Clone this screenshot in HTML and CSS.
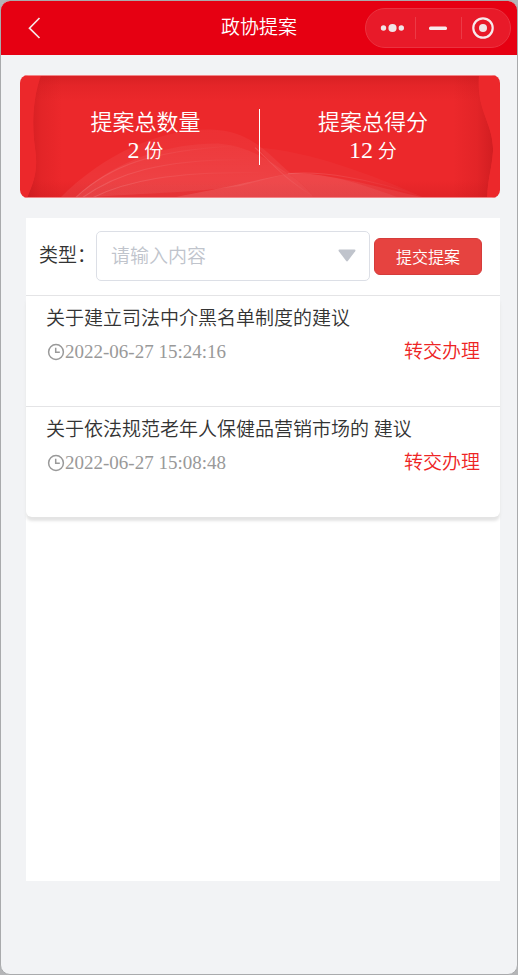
FILE: index.html
```html
<!DOCTYPE html>
<html lang="zh-CN">
<head>
<meta charset="utf-8">
<meta name="viewport" content="width=device-width, initial-scale=1">
<title>政协提案</title>
<link rel="stylesheet" href="styles.css">
</head>
<body>
<div class="window">
  <header class="topbar">
    <button class="back" type="button" aria-label="返回">
      <svg width="14" height="24" viewBox="0 0 14 24" fill="none" stroke="#f7e3e4" stroke-width="1.7"><path d="M12.5 2 2.5 12.2 12.5 22"/></svg>
    </button>
    <h1 class="topbar-title">政协提案</h1>
    <div class="capsule">
      <button class="capsule-btn" type="button" aria-label="更多">
        <svg width="26" height="24" viewBox="0 0 26 24" fill="#f0e6e7"><circle cx="5.5" cy="12" r="2.7"/><circle cx="14.5" cy="12" r="4.1"/><circle cx="23.3" cy="12" r="2.7"/></svg>
      </button>
      <button class="capsule-btn" type="button" aria-label="最小化">
        <svg width="24" height="24" viewBox="0 0 24 24" fill="#f7ebec"><rect x="2" y="10.5" width="18" height="3.6" rx="1.5"/></svg>
      </button>
      <button class="capsule-btn" type="button" aria-label="关闭">
        <svg width="24" height="24" viewBox="0 0 24 24" fill="none"><circle cx="12" cy="12" r="9.7" stroke="#f7ebec" stroke-width="2.2"/><circle cx="12" cy="12" r="4" fill="#f0e6e7"/></svg>
      </button>
    </div>
  </header>

  <main class="page">
    <section class="banner">
      <svg class="banner-art" viewBox="0 0 480 122" preserveAspectRatio="none" aria-hidden="true">
        <defs>
          <clipPath id="sheet"><path d="M21 0C12 26 12 50 15 73C18 92 15 104 7 122H467C468 102 472 92 473 76C474 48 456 36 459 0Z"/></clipPath>
          <linearGradient id="shade-left" x1="0" y1="0" x2="1" y2="0"><stop offset="0" stop-color="#b81418" stop-opacity=".5"/><stop offset=".4" stop-color="#b81418" stop-opacity=".18"/><stop offset="1" stop-color="#b81418" stop-opacity="0"/></linearGradient>
          <linearGradient id="shade-right" x1="1" y1="0" x2="0" y2="0"><stop offset="0" stop-color="#b81418" stop-opacity=".5"/><stop offset=".4" stop-color="#b81418" stop-opacity=".18"/><stop offset="1" stop-color="#b81418" stop-opacity="0"/></linearGradient>
          <linearGradient id="shade-top" x1="0" y1="0" x2="0" y2="1"><stop offset="0" stop-color="#b81418" stop-opacity=".4"/><stop offset=".4" stop-color="#b81418" stop-opacity=".16"/><stop offset="1" stop-color="#b81418" stop-opacity="0"/></linearGradient>
          <linearGradient id="shade-bottom" x1="0" y1="1" x2="0" y2="0"><stop offset="0" stop-color="#b81418" stop-opacity=".22"/><stop offset="1" stop-color="#b81418" stop-opacity="0"/></linearGradient>
          <linearGradient id="veil" x1="0" y1="0" x2="0" y2="1"><stop offset="0" stop-color="#fff" stop-opacity=".04"/><stop offset="1" stop-color="#fff" stop-opacity=".07"/></linearGradient>
          <linearGradient id="fade" x1="0" y1="0" x2="1" y2="0"><stop offset="0" stop-color="#fff" stop-opacity=".14"/><stop offset="1" stop-color="#fff" stop-opacity="0"/></linearGradient>
        </defs>
        <rect width="480" height="122" fill="#ec282b"/>
        <g clip-path="url(#sheet)">
          <path d="M0 0H480V26H0Z" fill="url(#shade-top)"/>
          <path d="M0 104H480V122H0Z" fill="url(#shade-bottom)"/>
          <path d="M21 0C12 26 12 50 15 73C18 92 15 104 7 122H42V0Z" fill="url(#shade-left)"/>
          <path d="M467 122C468 102 472 92 473 76C474 48 456 36 459 0H433V122Z" fill="url(#shade-right)"/>
          <path d="M40 122C85 77 140 54 190 54C232 55 248 79 270 97C310 98 350 109 405 122Z" fill="url(#veil)"/>
          <path d="M55 122C95 84 148 68 198 68C231 71 250 86 268 98L220 110C180 116 110 118 55 122Z" fill="url(#veil)"/>
          <path d="M238 72C290 76 350 98 405 122H294C288 113 278 104 268 98C254 94 247 82 238 72Z" fill="#fff" fill-opacity=".03"/>
          <path d="M150 122C210 111 232 105 268 98C278 104 288 113 294 122Z" fill="#fff" fill-opacity=".1"/>
          <path d="M268 98C310 96 345 110 380 122H294C288 113 278 104 268 98Z" fill="#fff" fill-opacity=".06"/>
          <g fill="none" stroke="url(#fade)">
            <path d="M55 122C90 90 130 75 220 70"/>
            <path d="M62 122C95 98 140 83 230 84"/>
            <path d="M72 122C105 106 150 95 250 97"/>
            <path d="M235 72C250 85 260 100 296 122"/>
            <path d="M268 98C300 95 350 102 405 122"/>
          </g>
        </g>
        <path d="M0 .5H480M0 121.5H480" stroke="#f38588" stroke-width="1"/>
      </svg>
      <div class="stat">
        <div class="stat-label">提案总数量</div>
        <div class="stat-value"><span class="stat-number">2</span> 份</div>
      </div>
      <div class="stat">
        <div class="stat-label">提案总得分</div>
        <div class="stat-value"><span class="stat-number">12</span> 分</div>
      </div>
    </section>

    <section class="panel">
      <form class="filter">
        <label class="filter-label" for="kind">类型：</label>
        <div class="select-box">
          <select class="select" id="kind"><option>请输入内容</option></select>
          <svg class="select-arrow" width="18" height="13" viewBox="0 0 18 13" aria-hidden="true"><path d="M1.5.5H16.5Q18 .8 17.2 2.2L10 11.8Q9 13 8 11.8L.8 2.2Q0 .8 1.5.5Z" fill="#c0c4cc"/></svg>
        </div>
        <button class="submit" type="button">提交提案</button>
      </form>
      <ul class="list">
        <li class="item">
          <h2 class="item-title">关于建立司法中介黑名单制度的建议</h2>
          <div class="item-meta">
            <svg class="clock" width="18" height="18" viewBox="0 0 18 18" fill="none" stroke="#999" stroke-width="1.5" aria-hidden="true"><circle cx="9" cy="9" r="7.4"/><path d="M8.7 4.8V9.3H12.8"/></svg>
            <time class="item-time" datetime="2022-06-27T15:24:16">2022-06-27 15:24:16</time>
            <span class="item-status">转交办理</span>
          </div>
        </li>
        <li class="item">
          <h2 class="item-title">关于依法规范老年人保健品营销市场的 建议</h2>
          <div class="item-meta">
            <svg class="clock" width="18" height="18" viewBox="0 0 18 18" fill="none" stroke="#999" stroke-width="1.5" aria-hidden="true"><circle cx="9" cy="9" r="7.4"/><path d="M8.7 4.8V9.3H12.8"/></svg>
            <time class="item-time" datetime="2022-06-27T15:08:48">2022-06-27 15:08:48</time>
            <span class="item-status">转交办理</span>
          </div>
        </li>
      </ul>
    </section>
  </main>
</div>
</body>
</html>
```
FILE: styles.css
```css
* {
  box-sizing: border-box;
}

body {
  margin: 0;
  background: #b4b5b7;
  color: #333;
  font-family: "Liberation Serif", "Noto Sans CJK SC", serif;
  font-size: 19px;
  font-weight: 350;
}

button,
select {
  font-family: inherit;
  font-weight: inherit;
}

button {
  padding: 0;
  border: 0;
  background: none;
  cursor: pointer;
}

svg {
  display: block;
}

.window {
  display: flex;
  flex-direction: column;
  min-height: 100vh;
  border: 1px solid #a9aaac;
  border-radius: 10px;
  background: #f2f3f5;
  overflow: hidden;
}

.topbar {
  display: grid;
  grid-template-columns: 1fr auto 1fr;
  align-items: center;
  height: 54px;
  padding: 0 6px 0 26px;
  background: #e60012;
}

.back {
  justify-self: start;
}

.topbar-title {
  margin: 0 20px 0 0;
  color: #fff;
  font-size: 19px;
  font-weight: inherit;
  line-height: 28px;
}

.capsule {
  display: grid;
  grid-template-columns: 49px 46px 43px;
  justify-self: end;
  height: 40px;
  padding-right: 6px;
  border: 1px solid #ea3340;
  border-radius: 20px;
  background: #e81a29;
}

.capsule-btn {
  display: flex;
  align-items: center;
  justify-content: center;
  height: 22px;
  margin: 8px 0;
}

.capsule-btn + .capsule-btn {
  border-left: 1px solid #ec3a46;
}

.page {
  flex: 1;
  display: flex;
  flex-direction: column;
  gap: 20px;
  padding: 20px 17px 93px 19px;
}

.banner {
  position: relative;
  display: grid;
  grid-template-columns: 1fr 1fr;
  padding: 34px 14px 33px 12px;
  border-radius: 8px;
  color: #fff;
  text-align: center;
  overflow: hidden;
}

.banner-art {
  position: absolute;
  inset: 0;
  width: 100%;
  height: 100%;
}

.stat {
  position: relative;
}

.stat + .stat {
  border-left: 1px solid #fff;
}

.stat-label {
  font-size: 22px;
  line-height: 28px;
}

.stat-value {
  font-size: 19px;
  line-height: 27px;
}

.stat-number {
  font-size: 24px;
}

.panel {
  flex: 1;
  margin-left: 6px;
  background: #fff;
}

.filter {
  display: flex;
  align-items: center;
  padding: 13px 18px 14px 13px;
}

.filter-label {
  line-height: 28px;
}

.select-box {
  position: relative;
  flex: 1;
  margin-right: 4px;
}

.select {
  appearance: none;
  display: block;
  width: 100%;
  height: 50px;
  padding: 0 36px 0 14px;
  border: 1px solid #dcdfe6;
  border-radius: 5px;
  background: #fff;
  color: #c0c4cc;
  font-size: 19px;
}

.select-arrow {
  position: absolute;
  top: 18px;
  right: 14px;
  pointer-events: none;
}

.submit {
  width: 108px;
  height: 37px;
  border: 1px solid #d53c3b;
  border-radius: 6px;
  background: #e64340;
  color: #fff;
  font-size: 16px;
}

.list {
  margin: 0;
  padding: 0;
  list-style: none;
  border-radius: 6px;
  box-shadow: 0 4px 3px #e4e4e4;
}

.item {
  padding: 9px 20px 40px;
  border-top: 1px solid #e4e4e6;
}

.item-title {
  margin: 0 0 5px;
  font-size: 19px;
  font-weight: inherit;
  line-height: 28px;
}

.item-meta {
  display: flex;
  align-items: center;
  line-height: 28px;
}

.clock {
  margin-left: 1px;
}

.item-time {
  color: #999;
}

.item-status {
  margin-left: auto;
  color: #ee2424;
}
```
